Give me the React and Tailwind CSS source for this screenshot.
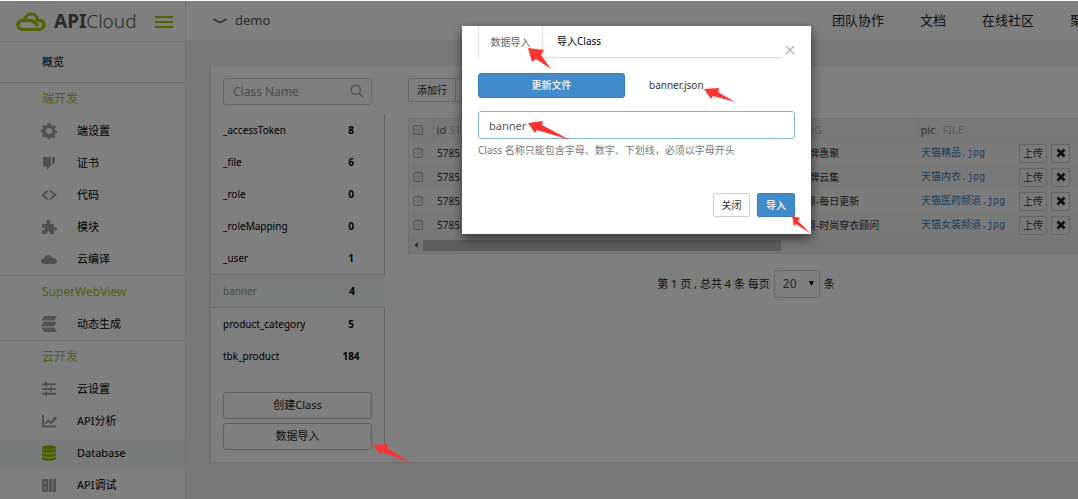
import React, { useState } from 'react';

const SIDEBAR = [
  {
    title: '端开发',
    items: [
      { label: '端设置', icon: 'gear' },
      { label: '证书', icon: 'cert' },
      { label: '代码', icon: 'code' },
      { label: '模块', icon: 'puzzle' },
      { label: '云编译', icon: 'cloud' },
    ],
  },
  {
    title: 'SuperWebView',
    items: [{ label: '动态生成', icon: 'stack' }],
  },
  {
    title: '云开发',
    items: [
      { label: '云设置', icon: 'sliders' },
      { label: 'API分析', icon: 'chart' },
      { label: 'Database', icon: 'database', active: true },
      { label: 'API调试', icon: 'debug' },
    ],
  },
];

const CLASSES = [
  { name: '_accessToken', count: 8 },
  { name: '_file', count: 6 },
  { name: '_role', count: 0 },
  { name: '_roleMapping', count: 0 },
  { name: '_user', count: 1 },
  { name: 'banner', count: 4 },
  { name: 'product_category', count: 5 },
  { name: 'tbk_product', count: 184 },
];

const ROWS = [
  { id: '5785', title: '天猫精品-品牌惠聚', pic: '天猫精品.jpg' },
  { id: '5785', title: '天猫内衣-品牌云集', pic: '天猫内衣.jpg' },
  { id: '5785', title: '天猫医药频道-每日更新', pic: '天猫医药频道.jpg' },
  { id: '5785', title: '天猫女装频道-时尚穿衣顾问', pic: '天猫女装频道.jpg' },
];

const NAV = ['团队协作', '文档', '在线社区', '聚'];

// Sidebar glyphs, all on a 16x16 grid
const ICONS = {
  gear: (
    <path
      fillRule="evenodd"
      d="M6.600 0h2.800l.4 2.200 1.500.7 2-1 1.800 2.200-1.300 1.700.4 1.300 1.800.6v2l-2 .7-.5 1.300 1.100 1.900-2 2-1.900-1.100-1.300.5L8.800 16H6.800l-.7-2-1.400-.6-1.900 1.100-1.900-2 1-1.900-.5-1.300-1.400-.6v-2l1.700-.6.5-1.400L1 3.800l1.900-2 1.800 1.100 1.500-.7zM8 5a3 3 0 1 0 0 6 3 3 0 0 0 0-6z"
    />
  ),
  cert: <path d="M2 2h8v8.500l-4 4.500v-3.500H2zM11 2h3v5l-3 3z" />,
  code: <path d="M5.500 3.500L0 8l5.500 4.500h2.200L7 11 3 8l4-3 .7-1.500zM10.500 3.500L16 8l-5.500 4.500H8.300L9 11l4-3-4-3-.7-1.500z" />,
  puzzle: (
    <path d="M1 5h4.500c.5 0 .6-.5.2-1C4.800 2.500 5.800.8 7.500.8s2.700 1.700 1.800 3.200c-.3.500-.2 1 .3 1H13v3.200c0 .5.500.5 1 .2 1-.5 2 .2 2 1.400s-1 2-2 1.500c-.5-.3-1-.2-1 .3V15H9.200c-.5 0-.5-.5-.2-1 .5-1-.3-1.800-1.500-1.800S5.500 13 6 14c.3.500.2 1-.3 1H1v-3.500c0-.5.500-.6 1-.3 1.200.5 2-.2 2-1.200S3 8.300 2 8.800c-.5.300-1 .2-1-.3z" />
  ),
  cloud: <path d="M3.500 13C1.500 13 0 12 0 10.300s1.300-2.600 2.900-2.500C3.300 5.300 5 4 7.200 4c2 0 3.600 1.100 4.100 3 2.700-.4 4.700.9 4.700 3.200 0 1.800-1.300 2.800-3.200 2.800z" />,
  stack: <path d="M3 0h13l-2.500 4.500H.5zM2.500 5.800H15.500l-2 4.400H.5zM.5 11.500h13L16 16H3z" />,
  sliders: (
    <path d="M1 2.300h3V1h2v1.300h9v2H6v1.200H4V4.300H1zM1 7h8V5.800h2V7h4v2h-4v1.200H9V9H1zM1 11.700h3v-1.200h2v1.200h9v2H6V15H4v-1.300H1z" />
  ),
  chart: (
    <>
      <path d="M1 2h2v10.500h12v2H1z" />
      <path d="M4 9.500l3.500-3 2.500 2 3-3.500-1.200-1H15.500v3.800l-1-1-4.300 4.700-2.700-2.300L4 11.700z" />
    </>
  ),
  database: (
    <>
      <ellipse cx="8" cy="2.500" rx="7" ry="2.300" />
      <path d="M1 3.500c1.500 2 12.500 2 14 0v3.300c-1.500 1.900-12.500 1.900-14 0zM1 7.700c1.500 1.900 12.500 1.900 14 0v3.100c-1.500 1.900-12.500 1.900-14 0zM1 11.700c1.500 1.900 12.500 1.900 14 0v2.100c-1.500 2.700-12.500 2.700-14 0z" />
    </>
  ),
  debug: <path fillRule="evenodd" d="M1 2h6v13H1zM3.300 4.500v3h1.400v-3zM3.300 9.500v3h1.400v-3zM7.800 2h3.400v13H7.800zM12 2h3v13h-3z" />,
};

function MenuIcon({ name, active }) {
  return (
    <svg viewBox="0 0 16 16" className={active ? 'size-4 fill-[#92bd00]' : 'size-4 fill-[#a3a3a3]'}>
      {ICONS[name]}
    </svg>
  );
}

// Red pointer; the tip sits at the svg's origin
function Pointer({ points, className }) {
  return (
    <svg className={`absolute size-px overflow-visible pointer-events-none ${className}`} aria-hidden="true">
      <polygon points={points} fill="#fb3432" />
    </svg>
  );
}

function Logo() {
  return (
    <a href="#home" className="flex items-center gap-2">
      <svg viewBox="0 0 30 20" className="w-[30px] h-5" fill="none" stroke="#a4c800" strokeWidth="3.200" strokeLinecap="round">
        <path d="M22 17.500H7c-3.200 0-5.200-2-5.200-4.600S3.800 8.300 7 8.300h7c3.500 0 4.500 2.500 7 4.700" />
        <path d="M8.500 7.500C9.700 3.800 12.200 2 15 2c3.500 0 6.300 2.500 6.300 6.200 3.700 0 6.700 1.500 6.700 4.800 0 2.800-2.300 4.500-5.500 4.500" />
      </svg>
      <span className="text-[19px] leading-none text-[#555]">
        <b>API</b>
        <span className="font-light">Cloud</span>
      </span>
    </a>
  );
}

function Sidebar() {
  return (
    <aside className="w-[186px] shrink-0 bg-white border-r border-[#e4e4e4]">
      <div className="h-[42px] flex items-center justify-between pl-4 pr-3 pt-0.5 border-b border-[#e8e8e8]">
        <Logo />
        <button type="button" aria-label="菜单" className="flex flex-col gap-[3px]">
          <span className="block w-[18px] h-0.5 bg-[#a4c800]" />
          <span className="block w-[18px] h-0.5 bg-[#a4c800]" />
          <span className="block w-[18px] h-0.5 bg-[#a4c800]" />
        </button>
      </div>
      <a href="#overview" className="h-10 flex items-center pl-[42px] text-[11px] text-black">概览</a>
      {SIDEBAR.map((group) => (
        <section key={group.title} className="border-t border-[#d8d8d8]">
          <h2 className="h-8 flex items-center pl-[42px] text-[12px] text-[#a4c030]">{group.title}</h2>
          {group.items.map((item) => (
            <a
              key={item.label}
              href={`#${item.icon}`}
              className={`h-8 flex items-center gap-5 pl-[41px] text-[11px] text-black ${item.active ? 'bg-[#f2f8f7]' : ''}`}
            >
              <MenuIcon name={item.icon} active={item.active} />
              {item.label}
            </a>
          ))}
        </section>
      ))}
    </aside>
  );
}

function Header() {
  return (
    <header className="h-10 flex items-center justify-between bg-white pl-[27px] pr-[23px] pt-0.5 text-[13px] text-[#222]">
      <button type="button" className="flex items-center gap-2 text-[#555]">
        <svg viewBox="0 0 14 6" className="w-3.5 h-1.5" fill="none" stroke="#666" strokeWidth="1.600">
          <path d="M.5 1l4.500 2.800c1.300.8 2.700.8 4 0L13.500 1" />
        </svg>
        demo
      </button>
      <nav className="flex gap-9">
        {NAV.map((n) => (
          <a key={n} href={`#${n}`}>{n}</a>
        ))}
      </nav>
    </header>
  );
}

function ClassPanel() {
  return (
    <div className="w-[174px] shrink-0 py-3">
      <div className="relative mx-3 mr-[13px]">
        <input
          type="text"
          aria-label="Class Name"
          placeholder="Class Name"
          className="block w-full h-[27px] border border-[#ccc] rounded-[3px] pl-[9px] text-[12px] placeholder:text-[#999]"
        />
        <svg viewBox="0 0 14 14" className="absolute right-2 top-1.5 size-3.5" fill="none" stroke="#aaa" strokeWidth="1.500">
          <circle cx="5.800" cy="5.800" r="4.600" />
          <path d="M9.200 9.200l4 4" />
        </svg>
      </div>
      <ul className="mt-[9px] text-[10px] text-black">
        {CLASSES.map((c) => {
          const active = c.name === 'banner';
          return (
            <li
              key={c.name}
              className={active ? 'border-y border-[#ddd] bg-[#f6faf8] text-[#8aa870]' : 'border-r border-[#ccc]'}
            >
              <a href={`#${c.name}`} className="h-8 flex items-center justify-between pl-3 pr-[13px]">
                {c.name}
                <b className="w-10 text-center text-black">{c.count}</b>
              </a>
            </li>
          );
        })}
      </ul>
      <div className="border-r border-[#ccc] pt-5 pl-3 pr-3 flex flex-col gap-1 text-[11px] text-[#222]">
        <button type="button" className="h-[27px] border border-[#c0c0c0] rounded-[3px]">创建Class</button>
        <button type="button" className="h-[27px] border border-[#c0c0c0] rounded-[3px]">数据导入</button>
      </div>
    </div>
  );
}

function DataTable() {
  return (
    <div className="border border-[#e0e0e0] bg-[#f6f6f6]">
      <table className="w-full table-fixed text-left text-[10px] text-[#333]">
        <colgroup>
          <col className="w-6" />
          <col className="w-[319px]" />
          <col className="w-[165px]" />
          <col className="w-[98px]" />
          <col />
        </colgroup>
        <thead className="bg-[#f0f0f0] text-[11px] text-[#777]">
          <tr className="h-[22px]">
            <th className="pl-1">
              <input type="checkbox" aria-label="全选" className="block size-2.5 appearance-none border border-[#aaa] rounded-xs bg-[#e4e4e4]" />
            </th>
            <th className="pl-[3px] font-medium border-l border-[#e0e0e0]">id <span className="font-normal text-[#b8b8b8]">STRING</span></th>
            <th className="pl-[3px] font-medium border-l border-[#e0e0e0]">title <span className="ml-1 font-normal text-[#b8b8b8]">STRING</span></th>
            <th colSpan={2} className="pl-[3px] font-medium border-l border-[#e0e0e0]">pic <span className="ml-1 font-normal text-[#b8b8b8]">FILE</span></th>
          </tr>
        </thead>
        <tbody>
          {ROWS.map((r) => (
            <tr key={r.pic} className="h-6 even:bg-[#f2f2f2]">
              <td className="pl-1">
                <input type="checkbox" aria-label={r.pic} className="block size-2.5 appearance-none border border-[#aaa] rounded-xs bg-[#e4e4e4]" />
              </td>
              <td className="pl-1">{r.id}</td>
              <td className="pl-1 whitespace-nowrap">{r.title}</td>
              <td className="pl-1 whitespace-nowrap font-['Liberation_Mono','Noto_Sans_CJK_SC',monospace]">
                <a href={`#${r.pic}`} className="text-[#3a80c0]">{r.pic}</a>
              </td>
              <td className="pl-1">
                <div className="flex gap-1">
                  <button type="button" className="w-7 h-[19px] border border-[#ccc] rounded-xs leading-none">上传</button>
                  <button type="button" aria-label="删除" className="w-[19px] h-[19px] flex items-center justify-center border border-[#ccc] rounded-xs">
                    <svg viewBox="0 0 10 10" className="size-2.5" stroke="#222" strokeWidth="2.800">
                      <path d="M1.500 1.500l7 7M8.500 1.500l-7 7" />
                    </svg>
                  </button>
                </div>
              </td>
            </tr>
          ))}
        </tbody>
      </table>
      <div className="h-4 flex items-center bg-[#ececec]">
        <span className="w-3.5 flex justify-center">
          <svg viewBox="0 0 4 6" className="w-1 h-1.5" fill="#777"><path d="M4 0v6L0 3z" /></svg>
        </span>
        <span className="h-[11px] w-[358px] bg-[#bcbcbc]" />
      </div>
    </div>
  );
}

function DataPanel() {
  return (
    <div className="flex-1 min-w-0 pt-3 pl-[23px] pr-[22px]">
      <div className="flex text-[10px] text-[#222]">
        <button type="button" className="w-12 h-6 border border-[#ccc] rounded-l-xs">添加行</button>
        <button type="button" className="w-12 h-6 border border-l-0 border-[#ccc] rounded-r-xs">删除行</button>
      </div>
      <div className="mt-4">
        <DataTable />
      </div>
      <div className="mt-4 flex items-center justify-center gap-1 text-[11px] text-[#222]">
        <label htmlFor="page-size">第 1 页 , 总共 4 条 每页</label>
        <div className="relative">
          <select id="page-size" defaultValue="20" className="w-[46px] h-7 appearance-none border border-[#ccc] rounded-[3px] pl-2 text-[12px] text-[#555]">
            <option>20</option>
            <option>50</option>
          </select>
          <svg viewBox="0 0 6 6" className="absolute right-1.5 top-[11px] size-[5px] pointer-events-none"><path d="M0 0h6L3 6z" /></svg>
        </div>
        <span>条</span>
      </div>
    </div>
  );
}

function ImportDialog() {
  const [name, setName] = useState('banner');

  return (
    <div role="dialog" aria-label="数据导入" className="relative w-[349px] px-4 pb-[17px] bg-white shadow-[0_4px_10px_rgba(0,0,0,0.6)] text-[10px] text-[#333]">
      <div className="flex items-center justify-between">
        <div className="flex w-[304px] h-8 text-black">
          <button type="button" className="w-[65px] border-x border-[#ddd] text-[#666]">数据导入</button>
          <button type="button" className="flex-1 pl-3.5 text-left border-b border-[#ddd]">导入Class</button>
        </div>
        <button type="button" aria-label="关闭" className="pt-4">
          <svg viewBox="0 0 10 10" className="size-2.5" stroke="#bbb" strokeWidth="1.600"><path d="M1 1l8 8M9 1L1 9" /></svg>
        </button>
      </div>

      <div className="mt-[15px] flex items-center gap-6">
        <button type="button" className="w-[147px] h-[25px] rounded-[3px] bg-[#428bca] border border-[#357ebd] font-medium text-white">更新文件</button>
        <span>banner.json</span>
      </div>

      <input
        type="text"
        aria-label="Class 名称"
        aria-describedby="class-help"
        value={name}
        onChange={(e) => setName(e.target.value)}
        className="mt-[13px] block w-full h-7 border border-[#86b1d9] rounded-[3px] px-2.5 text-[11px] text-[#555] outline-none"
      />
      <p id="class-help" className="mt-[3px] leading-4 text-[#777]">Class 名称只能包含字母、数字、下划线，必须以字母开头</p>

      <div className="mt-[35px] flex justify-end gap-[7px]">
        <button type="button" className="w-[37px] h-6 border border-[#ccc] rounded-xs">关闭</button>
        <button type="button" className="w-[38px] h-6 rounded-xs bg-[#428bca] border border-[#357ebd] font-medium text-white">导入</button>
      </div>

      <Pointer className="left-[66px] top-[22px]" points="0,0 16,2 13,7 23,21 8,11 4,14" />
      <Pointer className="left-[242px] top-[63px]" points="0,0 15,-1 14,3 31,13 9,7 7,10" />
      <Pointer className="left-[66px] top-[97px]" points="0,0 15,-2 14,2 42,17 9,7 7,10" />
      <Pointer className="left-[330px] top-[190px]" points="0,0 8,2 6,5 19,18 4,8 2,10" />
    </div>
  );
}

export default function App() {
  return (
    <div className="relative h-screen overflow-hidden bg-[#f2f2f2] font-['Noto_Sans','Noto_Sans_CJK_SC',sans-serif]">
      <div className="flex min-h-full">
        <Sidebar />
        <div className="flex-1 min-w-[920px]">
          <Header />
          <main className="pl-6 pt-[26px]">
            <div className="flex bg-white border-l border-[#e4e4e4] shadow-sm">
              <ClassPanel />
              <DataPanel />
            </div>
          </main>
        </div>
      </div>

      <div className="absolute inset-x-0 top-px bottom-0 bg-black/50 flex items-start justify-center pl-[195px] pt-[25px]">
        <ImportDialog />
        <Pointer className="left-[373px] top-[444px]" points="0,0 15,-1 14,3 38,18 9,7 7,9" />
      </div>
    </div>
  );
}
